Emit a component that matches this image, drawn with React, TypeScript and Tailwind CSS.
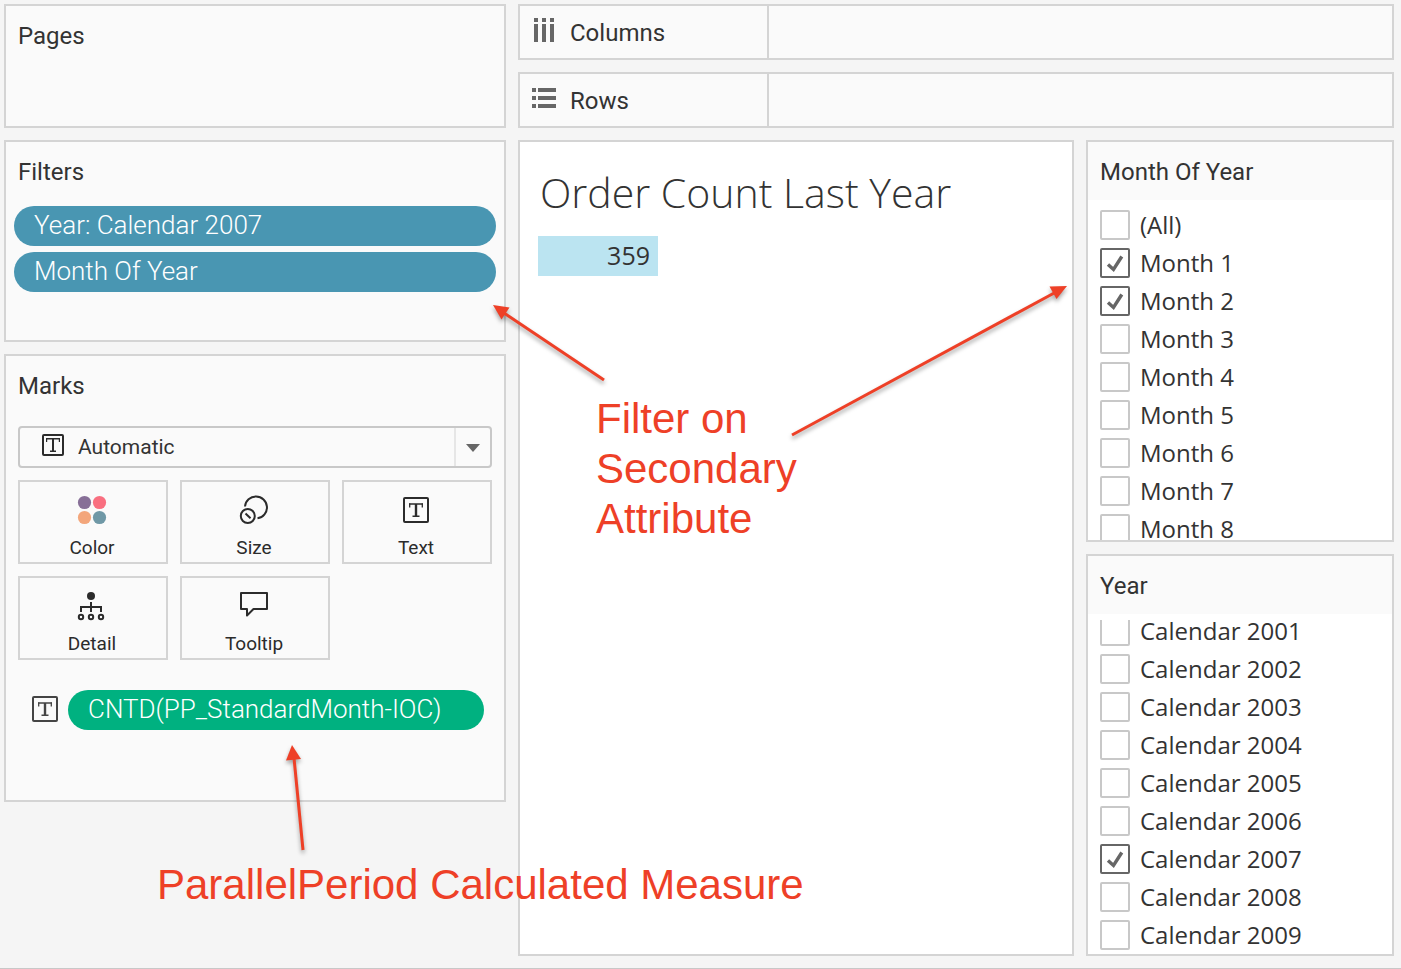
import { useState } from "react";
import type { ReactNode } from "react";

const months = ["(All)", "Month 1", "Month 2", "Month 3", "Month 4", "Month 5", "Month 6", "Month 7", "Month 8"];

const years = [
  "Calendar 2001",
  "Calendar 2002",
  "Calendar 2003",
  "Calendar 2004",
  "Calendar 2005",
  "Calendar 2006",
  "Calendar 2007",
  "Calendar 2008",
  "Calendar 2009",
];

function TextIcon({ size, className = "" }: { size: number; className?: string }) {
  return (
    <svg width={size} height={size} viewBox="0 0 26 26" fill="none" stroke="currentColor" className={className} aria-hidden="true">
      <rect x="1" y="1" width="24" height="24" rx="1" strokeWidth="2" />
      <path d="M6 7h14M9.5 19.3h7" strokeWidth="1.6" />
      <path d="M6.7 6.5v4M19.3 6.5v4" strokeWidth="1.3" />
      <path d="M13 7v12" strokeWidth="2.4" />
    </svg>
  );
}

// Smaller frame with the T drawn nearly edge to edge
function SelectTextIcon() {
  return (
    <svg width="22" height="22" viewBox="0 0 22 22" fill="none" stroke="currentColor" aria-hidden="true">
      <rect x="1" y="1" width="20" height="20" rx="1" strokeWidth="2" />
      <path d="M4 4.8h14M8 17.3h6" strokeWidth="1.5" />
      <path d="M4.6 4.5v3.5M17.4 4.5v3.5" strokeWidth="1.2" />
      <path d="M11 5v12" strokeWidth="2" />
    </svg>
  );
}

function ColorIcon() {
  return (
    <svg width="30" height="30" viewBox="0 0 30 30" aria-hidden="true">
      <circle cx="7.5" cy="7.5" r="6.6" fill="#876f97" />
      <circle cx="22.5" cy="7.5" r="6.6" fill="#f96f80" />
      <circle cx="7.5" cy="22.5" r="6.6" fill="#f3a67b" />
      <circle cx="22.5" cy="22.5" r="6.6" fill="#6f98a6" />
    </svg>
  );
}

function SizeIcon() {
  return (
    <svg width="30" height="30" viewBox="0 0 30 30" fill="none" stroke="currentColor" strokeWidth="2" aria-hidden="true">
      <path d="M6 11.5A11 11 0 1 1 18.5 23.3" />
      <circle cx="8.8" cy="21" r="7" />
      <path d="M6.5 18.5l5 4.8" />
    </svg>
  );
}

function DetailIcon() {
  return (
    <svg width="30" height="30" viewBox="0 0 30 30" fill="none" stroke="currentColor" strokeWidth="2" aria-hidden="true">
      <circle cx="14" cy="5" r="4" fill="currentColor" stroke="none" />
      <path d="M14 11v10M4 21v-5h20v5" />
      <circle cx="4" cy="26" r="2.2" />
      <circle cx="14" cy="26" r="2.2" />
      <circle cx="24" cy="26" r="2.2" />
    </svg>
  );
}

function TooltipIcon() {
  return (
    <svg width="30" height="30" viewBox="0 0 30 30" fill="none" stroke="currentColor" strokeWidth="2" strokeLinejoin="round" aria-hidden="true">
      <path d="M2 2h26v16H14.5L8 24.5V18H2z" />
    </svg>
  );
}

function Card({ title, className = "", children }: { title: string; className?: string; children?: ReactNode }) {
  return (
    <section className={`flex flex-col border-2 border-[#d4d4d4] bg-[#fafafa] ${className}`}>
      <h2 className="flex h-[58px] shrink-0 items-center px-3 pt-0.5 text-2xl">{title}</h2>
      {children}
    </section>
  );
}

function Shelf({ label, icon }: { label: string; icon: ReactNode }) {
  return (
    <div className="flex h-14 border-2 border-[#d4d4d4] bg-[#fafafa]">
      <div className="flex w-[249px] items-center gap-3.5 border-r-2 border-[#d4d4d4] px-3 pt-0.5 text-2xl">
        {icon}
        {label}
      </div>
    </div>
  );
}

function MarkButton({ label, icon }: { label: string; icon: ReactNode }) {
  return (
    <button className="flex h-21 flex-col items-center justify-end border-2 border-[#d4d4d4] pr-0.5 text-[19px] leading-7 text-[#2b2b2b]">
      <span className="mb-[9px] flex h-[30px] items-center">{icon}</span>
      {label}
    </button>
  );
}

function CheckItem({ label, defaultChecked }: { label: string; defaultChecked: boolean }) {
  const [checked, setChecked] = useState(defaultChecked);

  return (
    <label className="flex h-[38px] items-center gap-2.5 font-['Open_Sans','Noto_Sans',sans-serif] text-2xl">
      <span className="grid">
        <input
          type="checkbox"
          checked={checked}
          onChange={(e) => setChecked(e.target.checked)}
          className="col-start-1 row-start-1 size-[30px] appearance-none rounded-xs border-2 border-[#c8c8c8] bg-white checked:border-[#666]"
        />
        {checked && (
          <svg viewBox="0 0 30 30" className="pointer-events-none col-start-1 row-start-1 size-[30px]" fill="none" stroke="#666" strokeWidth="3.4" aria-hidden="true">
            <path d="M8 16.5l5.5 5L21.8 8.5" />
          </svg>
        )}
      </span>
      {label}
    </label>
  );
}

function FilterCard({ title, items, selected, scrolled }: { title: string; items: string[]; selected: string[]; scrolled?: boolean }) {
  return (
    <Card title={title} className="min-h-0 flex-1">
      <div className="flex min-h-0 flex-1 flex-col bg-white pt-1.5">
        <div className="min-h-0 flex-1 overflow-y-auto px-3 [scrollbar-width:none]">
          <div className={scrolled ? "-mt-2" : ""}>
            {items.map((item) => (
              <CheckItem key={item} label={item} defaultChecked={selected.includes(item)} />
            ))}
          </div>
        </div>
      </div>
    </Card>
  );
}

function Annotations() {
  return (
    <div className="pointer-events-none absolute inset-0 font-['Liberation_Sans',Arial,sans-serif] text-[42px] leading-[50px] text-[#ee4027]">
      <svg className="absolute top-0 left-0 h-full w-full drop-shadow-[0_3px_2px_rgba(0,0,0,0.35)]" fill="currentColor" stroke="currentColor" aria-hidden="true">
        <g strokeWidth="3">
          <path d="M604 380L504 313" />
          <path d="M792 435L1056 292" />
          <path d="M303 850L294 758" />
        </g>
        <g stroke="none">
          <path d="M493 305l16.5 2.5l-8 12z" />
          <path d="M1067 286l-10.5 13l-7-12.5z" />
          <path d="M292 745l-6 15.5l15-1.5z" />
        </g>
      </svg>
      <p className="absolute top-[394px] left-[596px] w-[230px]">Filter on Secondary Attribute</p>
      <p className="absolute top-[860px] left-[157px] whitespace-nowrap">ParallelPeriod Calculated Measure</p>
    </div>
  );
}

export default function App() {
  return (
    <div className="relative flex h-screen gap-3 overflow-hidden border-b border-[#c8c8c8] bg-[#f5f5f5] pt-1 pr-[7px] pb-3 pl-1 font-[Roboto,sans-serif] text-[#333]">
      <aside className="flex w-[502px] shrink-0 flex-col gap-3">
        <Card title="Pages" className="h-31" />

        <Card title="Filters" className="h-[202px]">
          <div className="flex flex-col gap-1.5 px-2 pt-1.5 text-[26px] font-light text-white">
            <button className="h-10 rounded-full bg-[#4996b2] px-5 pb-0.5 text-left">Year: Calendar 2007</button>
            <button className="h-10 rounded-full bg-[#4996b2] px-5 pb-0.5 text-left">Month Of Year</button>
          </div>
        </Card>

        <Card title="Marks" className="h-112">
          <div className="flex flex-col gap-3 px-3 pt-3">
            <div className="grid h-[42px] items-center">
              <select
                aria-label="Mark type"
                className="col-start-1 row-start-1 h-full w-full appearance-none rounded-sm border-2 border-[#c8c8c8] bg-transparent pt-0.5 pl-[58px] text-[21px]"
              >
                <option>Automatic</option>
              </select>
              <span className="pointer-events-none col-start-1 row-start-1 mb-1 ml-6 justify-self-start text-[#2b2b2b]">
                <SelectTextIcon />
              </span>
              <span className="pointer-events-none col-start-1 row-start-1 mr-0.5 flex h-[38px] w-9 items-center justify-center justify-self-end border-l-2 border-[#e6e6e6] pt-0.5">
                <svg width="14" height="8" viewBox="0 0 14 8" fill="#666" aria-hidden="true">
                  <path d="M0 0h14L7 8z" />
                </svg>
              </span>
            </div>

            <div className="grid grid-cols-3 gap-3">
              <MarkButton label="Color" icon={<ColorIcon />} />
              <MarkButton label="Size" icon={<SizeIcon />} />
              <MarkButton label="Text" icon={<TextIcon size={26} />} />
              <MarkButton label="Detail" icon={<DetailIcon />} />
              <MarkButton label="Tooltip" icon={<TooltipIcon />} />
            </div>
          </div>

          <div className="mt-[30px] flex items-center gap-2.5 pr-5 pl-[26px]">
            <TextIcon size={26} className="mb-0.5 text-[#444]" />
            <button className="h-10 flex-1 rounded-full bg-[#00b180] px-5 pb-0.5 text-left text-[26px] font-light text-white">
              CNTD(PP_StandardMonth-IOC)
            </button>
          </div>
        </Card>
      </aside>

      <main className="flex min-w-0 flex-1 flex-col gap-3">
        <Shelf
          label="Columns"
          icon={
            <svg width="24" height="24" viewBox="0 0 24 24" fill="#666" className="mb-1.5" aria-hidden="true">
              <path d="M2 0h4v4H2zM10 0h4v4h-4zM18 0h4v4h-4zM2 6h4v18H2zM10 6h4v18h-4zM18 6h4v18h-4z" />
            </svg>
          }
        />
        <Shelf
          label="Rows"
          icon={
            <svg width="24" height="24" viewBox="0 0 24 24" fill="#666" className="mb-0.5" aria-hidden="true">
              <path d="M0 0h4v4H0zM0 8h4v4H0zM0 16h4v4H0zM6 0h18v4H6zM6 8h18v4H6zM6 16h18v4H6z" />
            </svg>
          }
        />

        <div className="flex min-h-0 flex-1 gap-3">
          <section className="min-w-0 flex-1 border-2 border-[#d4d4d4] bg-white px-[18px] pt-6 font-['Open_Sans','Noto_Sans',sans-serif]">
            <h1 className="pl-0.5 text-[41px] leading-[52px] font-light">Order Count Last Year</h1>
            <div className="mt-[18px] flex h-10 w-30 items-center justify-end bg-[#bbe4f1] px-2 text-[25px]">359</div>
          </section>

          <aside className="flex w-77 shrink-0 flex-col gap-3">
            <FilterCard title="Month Of Year" items={months} selected={["Month 1", "Month 2"]} />
            <FilterCard title="Year" items={years} selected={["Calendar 2007"]} scrolled />
          </aside>
        </div>
      </main>

      <Annotations />
    </div>
  );
}
